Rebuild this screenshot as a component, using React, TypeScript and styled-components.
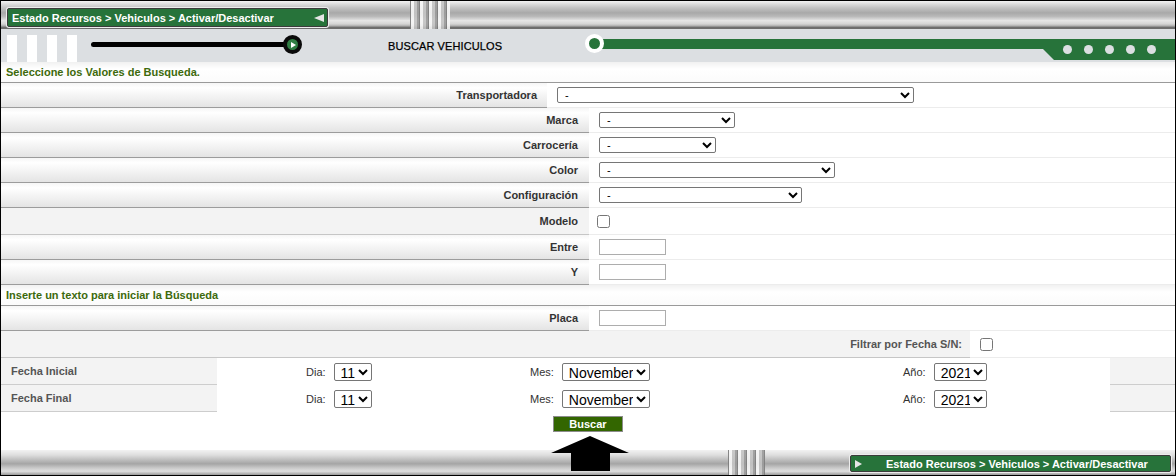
import React from 'react';
import styled, { createGlobalStyle } from 'styled-components';

const GlobalStyle = createGlobalStyle`
  html, body {
    margin: 0;
    padding: 0;
    background: #fff;
  }
  body {
    font-family: "Liberation Sans", Arial, sans-serif;
  }
`;

const green = '#27733a';
const metalTop = `linear-gradient(to bottom, #f4f4f4 0%, #dadada 12%, #c2c2c2 25%, #a9a9a9 42%, #b9b9b9 55%, #e6e6e6 70%, #d4d4d4 82%, #a8a8a8 90%, #6d6d6d 93%, #6d6d6d 100%)`;
const metalBottom = `linear-gradient(to bottom, #f2f2f2 0%, #dedede 20%, #bdbdbd 40%, #a5a5a5 55%, #c9c9c9 72%, #e0e0e0 85%, #9a9a9a 100%)`;
const rowShade = `linear-gradient(to bottom, #f6f6f6 0%, #ffffff 20%, #f0f0f0 65%, #e4e4e4 100%)`;

const Frame = styled.div`
  width: 1176px;
  height: 476px;
  box-sizing: border-box;
  border: 1px solid #000;
  display: flex;
  flex-direction: column;
  position: relative;
  overflow: hidden;
  background: #fff;
`;

/* ---------- metallic bars ---------- */

const MetalBar = styled.div<{ $h: number; $bottom?: boolean }>`
  height: ${p => p.$h}px;
  flex: none;
  display: flex;
  align-items: flex-start;
  background: ${p => (p.$bottom ? metalBottom : metalTop)};
`;

const Grooves = styled.div<{ $left: number; $w: number }>`
  margin-left: ${p => p.$left}px;
  width: ${p => p.$w}px;
  align-self: stretch;
  background: repeating-linear-gradient(
    to right,
    #7c7c7c 0 1px,
    #f6f6f6 1px 4px,
    #c4c4c4 4px 7px,
    #9a9a9a 7px 9px
  );
  opacity: 0.9;
`;

const Crumb = styled.div<{ $top: number; $left: number; $h: number }>`
  display: flex;
  align-items: center;
  box-sizing: border-box;
  width: 321px;
  height: ${p => p.$h}px;
  margin-top: ${p => p.$top}px;
  margin-left: ${p => p.$left}px;
  padding: 0 3px 0 4px;
  background: ${green};
  border: 1px solid #3b3b3b;
  border-radius: 2px;
  box-shadow: 0 0 0 1px #ececec;
  color: #fff;
  font-size: 11px;
  font-weight: bold;
  white-space: nowrap;
`;

const Triangle = styled.span<{ $dir: 'left' | 'right' }>`
  width: 0;
  height: 0;
  border-top: 4px solid transparent;
  border-bottom: 4px solid transparent;
  ${p =>
    p.$dir === 'left'
      ? `border-right: 10px solid #e6e6e6; margin-left: auto;`
      : `border-left: 7px solid #e6e6e6; margin-right: 24px;`}
`;

/* ---------- grey band with slider / progress ---------- */

const Band = styled.div`
  height: 33px;
  flex: none;
  display: flex;
  align-items: flex-start;
  background: #dcdfe2;
`;

const Ticks = styled.div`
  align-self: flex-end;
  display: flex;
  gap: 10px;
  margin-left: 6px;
`;

const Tick = styled.span`
  width: 10px;
  height: 27px;
  background: #fff;
`;

const Slider = styled.div`
  width: 211px;
  margin-left: 14px;
  margin-top: 6px;
  display: flex;
  align-items: center;
`;

const SliderLine = styled.span`
  flex: 1;
  height: 5px;
  background: #000;
  border-radius: 3px 0 0 3px;
  margin-right: -3px;
`;

const Knob = styled.span`
  width: 19px;
  height: 19px;
  box-sizing: border-box;
  border: 4px solid #0a0a0a;
  border-radius: 50%;
  background: #2f7d43;
  display: flex;
  align-items: center;
  justify-content: center;

  &::after {
    content: '';
    margin-left: 2px;
    border-left: 5px solid #fff;
    border-top: 3px solid transparent;
    border-bottom: 3px solid transparent;
  }
`;

const BandTitle = styled.div`
  width: 283px;
  box-sizing: border-box;
  padding-left: 86px;
  align-self: center;
  font-size: 11px;
  color: #000;
  letter-spacing: 0.1px;
  -webkit-text-stroke: 0.25px #000;
`;

const Progress = styled.div`
  flex: 1;
  display: flex;
  align-items: flex-start;
`;

const Ring = styled.span`
  flex: none;
  width: 19px;
  height: 19px;
  margin-top: 5px;
  box-sizing: border-box;
  border: 4px solid #fff;
  border-radius: 50%;
  background: ${green};
  position: relative;
  z-index: 1;
`;

const ProgressLine = styled.span`
  flex: 1;
  height: 10px;
  margin-top: 10px;
  margin-left: -2px;
  background: ${green};
`;

const Tail = styled.div`
  width: 132px;
  height: 21px;
  margin-top: 10px;
  box-sizing: border-box;
  padding: 6px 0 0 20px;
  display: flex;
  gap: 12px;
  background: ${green};
  clip-path: polygon(0 0, 100% 0, 100% 100%, 11px 100%, 0 10px);
`;

const Dot = styled.span`
  width: 9px;
  height: 9px;
  border-radius: 50%;
  background: #dcdfe2;
`;

/* ---------- form ---------- */

const SectionRow = styled.div<{ $h: number }>`
  height: ${p => p.$h}px;
  flex: none;
  box-sizing: border-box;
  display: flex;
  align-items: center;
  padding-left: 5px;
  background: linear-gradient(to bottom, #f1f1f1 0%, #ffffff 35%, #fbfbfb 100%);
  border-bottom: 1px solid #9a9a9a;
  color: #3d6a0c;
  font-size: 11px;
  font-weight: bold;
`;

const Row = styled.div<{ $label: number; $h?: number }>`
  display: grid;
  grid-template-columns: ${p => p.$label}px 1fr;
  height: ${p => p.$h ?? 25}px;
  flex: none;
`;

const LabelCell = styled.div<{ $flat?: boolean; $pad?: number; $muted?: boolean }>`
  display: flex;
  align-items: center;
  justify-content: flex-end;
  box-sizing: border-box;
  padding-right: ${p => p.$pad ?? 10}px;
  background: ${p => (p.$flat ? '#f3f3f3' : rowShade)};
  border-bottom: 1px solid ${p => (p.$flat ? '#c6c6c6' : '#9c9c9c')};
  color: ${p => (p.$muted ? '#555' : '#333')};
  font-size: 11px;
  font-weight: bold;
`;

const ValueCell = styled.div<{ $pad?: number }>`
  display: flex;
  align-items: center;
  box-sizing: border-box;
  padding-left: ${p => p.$pad ?? 10}px;
  border-bottom: 1px solid #ececec;
`;

const Select = styled.select<{ $w: number; $big?: boolean }>`
  width: ${p => p.$w}px;
  height: ${p => (p.$big ? 18 : 16)}px;
  box-sizing: border-box;
  padding: 0 0 0 ${p => (p.$big ? 2 : 3)}px;
  font-family: "Liberation Sans", Arial, sans-serif;
  font-size: ${p => (p.$big ? 14 : 11)}px;
  color: #000;
  background: #fff;
  border: 1px solid #767676;
  border-radius: 2px;
`;

const TextInput = styled.input`
  width: 67px;
  height: 16px;
  box-sizing: border-box;
  padding: 0 2px;
  border: 1px solid #adadad;
  font-size: 11px;
`;

const Checkbox = styled.input.attrs({ type: 'checkbox' })`
  width: 13px;
  height: 13px;
  margin: 0;
`;

const DateRow = styled.div`
  display: grid;
  grid-template-columns: 216px 89px 224px 373px 207px 1fr;
  height: 27px;
  flex: none;
`;

const DateLabel = styled.div`
  display: flex;
  align-items: center;
  box-sizing: border-box;
  padding-left: 10px;
  background: #f3f3f3;
  border-bottom: 1px solid #cdcdcd;
  color: #555;
  font-size: 11px;
  font-weight: bold;
`;

const DateField = styled.div`
  display: flex;
  align-items: center;
  gap: 8px;
  color: #333;
  font-size: 11px;
`;

const Filler = styled.div<{ $shade?: boolean }>`
  ${p => (p.$shade ? 'background: #f3f3f3; border-bottom: 1px solid #cdcdcd;' : '')}
`;

const Actions = styled.div`
  height: 38px;
  flex: none;
  display: flex;
  justify-content: center;
  align-items: flex-start;
  padding-top: 4px;
  box-sizing: border-box;
`;

const SearchButton = styled.button`
  width: 70px;
  height: 16px;
  box-sizing: border-box;
  padding: 0;
  background: #336600;
  border: 1px solid #8c8c8c;
  color: #fff;
  font-family: "Liberation Sans", Arial, sans-serif;
  font-size: 11px;
  font-weight: bold;
  cursor: pointer;
`;

const Pointer = styled.svg`
  position: absolute;
  left: 550px;
  top: 435px;
  z-index: 2;
`;

const Crumbs = () => <>Estado Recursos &gt; Vehiculos &gt; Activar/Desactivar</>;

const months = ['January', 'February', 'March', 'April', 'May', 'June', 'July', 'August', 'September', 'October', 'November', 'December'];

const DateLine: React.FC<{ label: string }> = ({ label }) => (
  <DateRow>
    <DateLabel>{label}</DateLabel>
    <Filler />
    <DateField>
      Dia:
      <Select $w={38} $big defaultValue="11">
        {Array.from({ length: 31 }, (_, i) => (
          <option key={i}>{i + 1}</option>
        ))}
      </Select>
    </DateField>
    <DateField>
      Mes:
      <Select $w={88} $big defaultValue="November">
        {months.map(m => (
          <option key={m}>{m}</option>
        ))}
      </Select>
    </DateField>
    <DateField>
      Año:
      <Select $w={53} $big defaultValue="2021">
        {[2019, 2020, 2021, 2022].map(y => (
          <option key={y}>{y}</option>
        ))}
      </Select>
    </DateField>
    <Filler $shade />
  </DateRow>
);

const selectRows = [
  { label: 'Marca', w: 136 },
  { label: 'Carrocería', w: 117 },
  { label: 'Color', w: 236 },
  { label: 'Configuración', w: 203 },
];

const App: React.FC = () => {
  return (
    <>
      <GlobalStyle />
      <Frame>
        <MetalBar $h={28}>
          <Crumb $top={7} $left={6} $h={19}>
            <Crumbs />
            <Triangle $dir="left" />
          </Crumb>
          <Grooves $left={82} $w={40} />
        </MetalBar>

        <Band>
          <Ticks>
            <Tick />
            <Tick />
            <Tick />
            <Tick />
          </Ticks>
          <Slider>
            <SliderLine />
            <Knob />
          </Slider>
          <BandTitle>BUSCAR VEHICULOS</BandTitle>
          <Progress>
            <Ring />
            <ProgressLine />
            <Tail>
              <Dot />
              <Dot />
              <Dot />
              <Dot />
              <Dot />
            </Tail>
          </Progress>
        </Band>

        <SectionRow $h={21}>Seleccione los Valores de Busqueda.</SectionRow>

        <Row $label={546}>
          <LabelCell>Transportadora</LabelCell>
          <ValueCell>
            <Select $w={357}>
              <option>-</option>
            </Select>
          </ValueCell>
        </Row>
        {selectRows.map(r => (
          <Row key={r.label} $label={588}>
            <LabelCell $pad={11}>{r.label}</LabelCell>
            <ValueCell>
              <Select $w={r.w}>
                <option>-</option>
              </Select>
            </ValueCell>
          </Row>
        ))}
        <Row $label={588} $h={27}>
          <LabelCell $flat $pad={11}>Modelo</LabelCell>
          <ValueCell $pad={8}>
            <Checkbox />
          </ValueCell>
        </Row>
        <Row $label={588}>
          <LabelCell $pad={11}>Entre</LabelCell>
          <ValueCell>
            <TextInput />
          </ValueCell>
        </Row>
        <Row $label={588}>
          <LabelCell $pad={11}>Y</LabelCell>
          <ValueCell>
            <TextInput />
          </ValueCell>
        </Row>

        <SectionRow $h={21}>Inserte un texto para iniciar la Búsqueda</SectionRow>

        <Row $label={588}>
          <LabelCell $pad={11}>Placa</LabelCell>
          <ValueCell>
            <TextInput />
          </ValueCell>
        </Row>
        <Row $label={969} $h={27}>
          <LabelCell $flat $muted $pad={8}>
            Filtrar por Fecha S/N:
          </LabelCell>
          <ValueCell $pad={10}>
            <Checkbox />
          </ValueCell>
        </Row>

        <DateLine label="Fecha Inicial" />
        <DateLine label="Fecha Final" />

        <Actions>
          <SearchButton>Buscar</SearchButton>
        </Actions>

        <MetalBar $h={25} $bottom>
          <Grooves $left={727} $w={37} />
          <Crumb $top={5} $left={85} $h={17}>
            <Triangle $dir="right" />
            <Crumbs />
          </Crumb>
        </MetalBar>

        <Pointer width="78" height="35" viewBox="0 0 78 35">
          <polygon points="39,0 0,17 20,17 20,35 59,35 59,17 78,17" fill="#000" />
        </Pointer>
      </Frame>
    </>
  );
};

export default App;
